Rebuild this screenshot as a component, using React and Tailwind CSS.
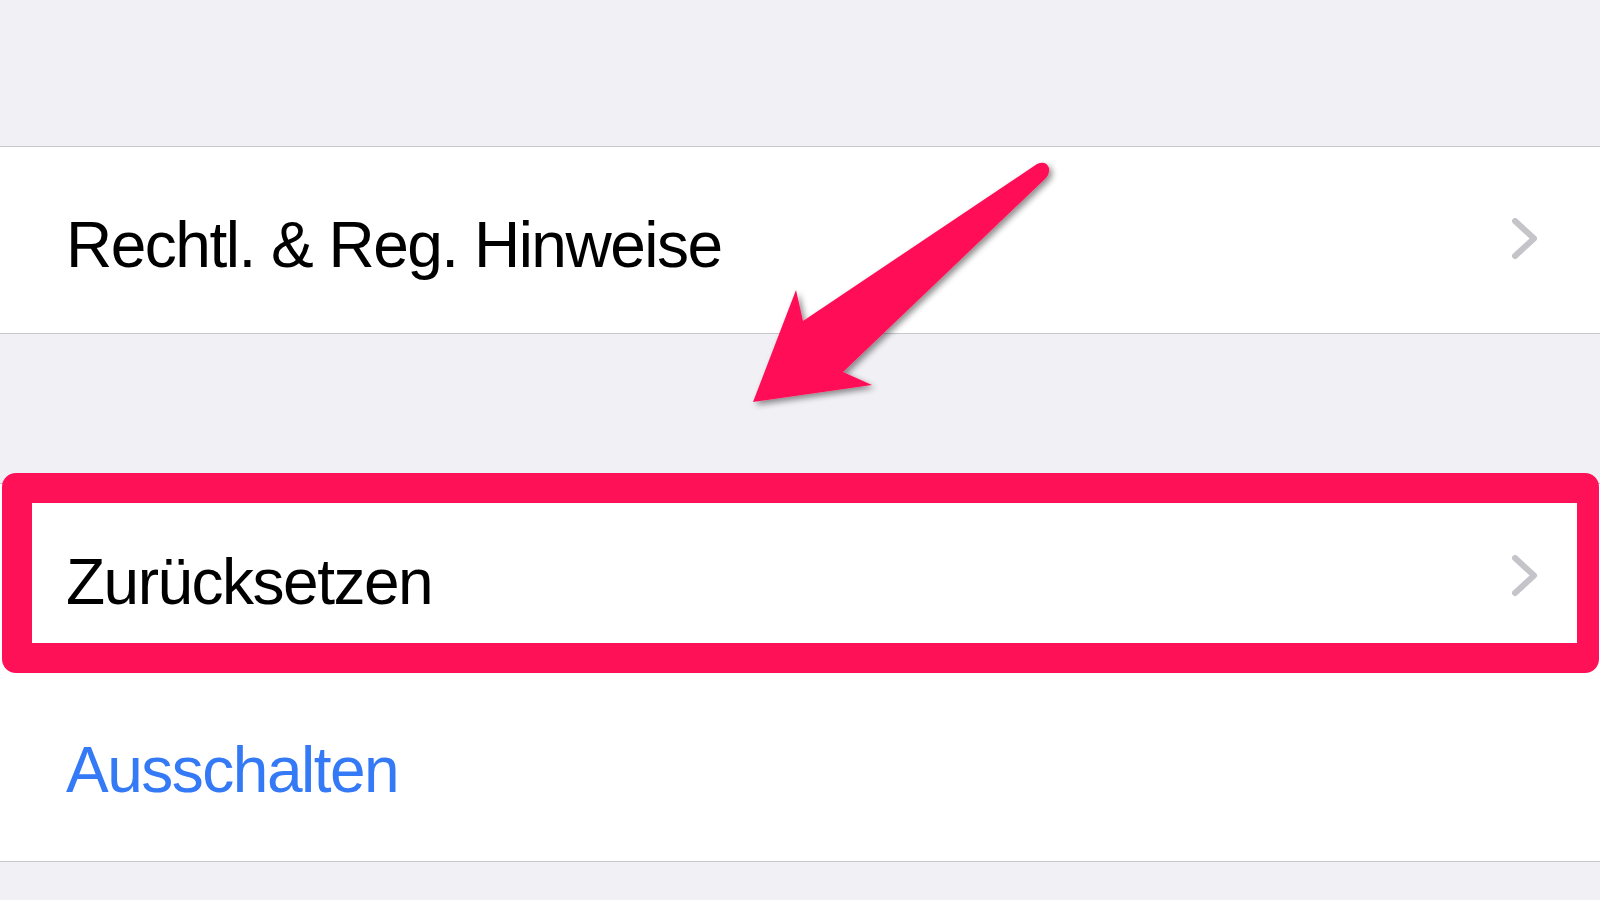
import React from "react";

function Chevron() {
  return (
    <svg width="30" height="44" viewBox="0 0 30 44" className="shrink-0">
      <path d="M5 3 L24 20.5 L5 38" fill="none" stroke="#c4c4c9" strokeWidth="6" strokeLinecap="round" strokeLinejoin="round" />
    </svg>
  );
}

function Row({ children, chevron, className = "", height }) {
  return (
    <div className={`flex items-center justify-between bg-white pl-[66px] pr-[60px] ${height} ${className}`}>
      <span className="pt-[9px] text-[64px] leading-none tracking-[-1.5px]">{children}</span>
      {chevron && <Chevron />}
    </div>
  );
}

export default function App() {
  return (
    <div className="relative h-[900px] w-[1600px] overflow-hidden bg-[#f0f0f5]" style={{ fontFamily: '"Liberation Sans", Arial, sans-serif' }}>
      <div className="flex flex-col">
        <div className="h-[147px] border-b border-[#c8c7cc]" />
        <Row chevron height="h-[187px]" className="border-b border-[#c8c7cc] text-black">
          Rechtl. &amp; Reg. Hinweise
        </Row>
        <div className="h-[150px] border-b border-[#c8c7cc]" />
        <Row chevron height="h-[186px]" className="text-black">
          Zurücksetzen
        </Row>
        <Row height="h-[192px]" className="border-b border-[#c8c7cc] text-[#3479f6]">
          Ausschalten
        </Row>
      </div>

      {/* highlight frame */}
      <div className="absolute left-[2px] top-[473px] h-[200px] w-[1597px] rounded-[14px] border-[30px] border-r-[22px] border-[#ff1157]" />

      {/* arrow */}
      <svg className="absolute left-0 top-0" width="1600" height="900" viewBox="0 0 1600 900">
        <defs>
          <filter id="sh" x="-20%" y="-20%" width="140%" height="140%">
            <feGaussianBlur in="SourceAlpha" stdDeviation="3" />
            <feOffset dx="3" dy="3" />
            <feComponentTransfer>
              <feFuncA type="linear" slope="0.45" />
            </feComponentTransfer>
            <feMerge>
              <feMergeNode />
              <feMergeNode in="SourceGraphic" />
            </feMerge>
          </filter>
        </defs>
        <path
          d="M1037 164 Q1046 160 1049 168 Q1050 174 1045 179 L843 372 L872 385 L753 402 L796 290 L803 321 Z"
          fill="#ff1157"
          filter="url(#sh)"
        />
      </svg>
    </div>
  );
}
